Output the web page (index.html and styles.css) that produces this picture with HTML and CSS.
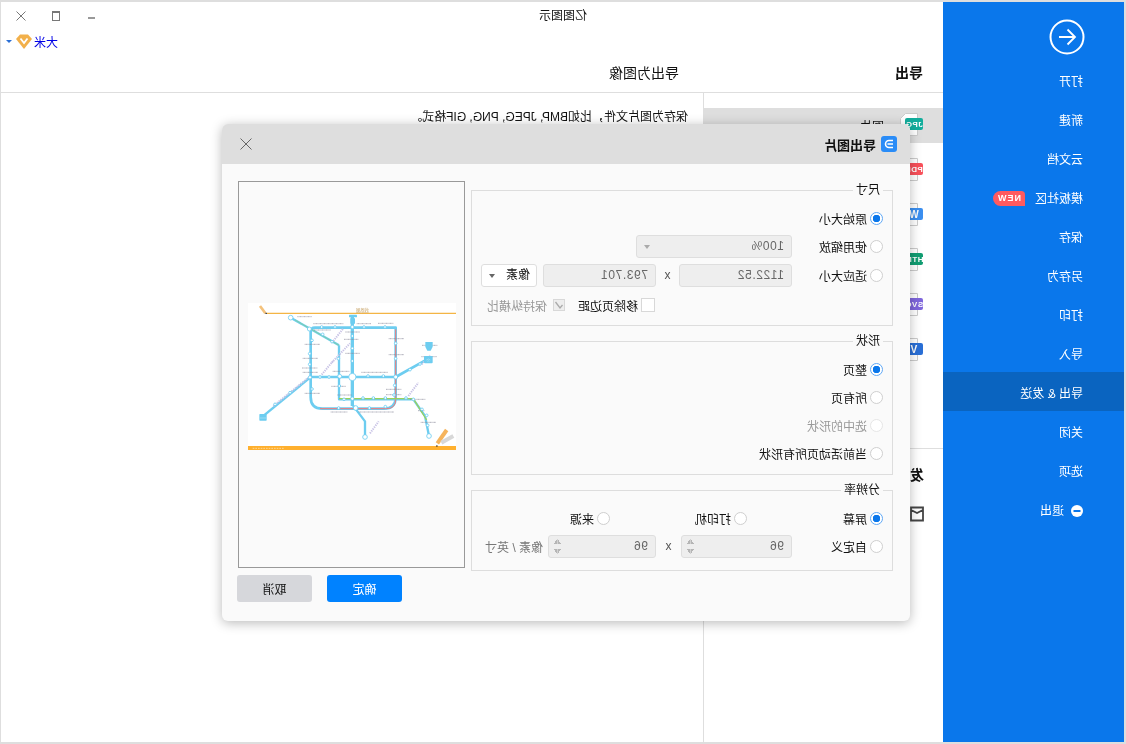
FILE: index.html
```html
<!DOCTYPE html>
<html lang="zh-CN">
<head>
<meta charset="utf-8">
<title>亿图图示</title>
<link rel="stylesheet" href="styles.css">
</head>
<body>
<div class="page">
  <aside class="sidebar">
    <div class="back">
      <svg width="36" height="36" viewBox="0 0 36 36" fill="none" stroke="#fff" stroke-width="2"><circle cx="18" cy="18" r="16.5"/><path d="M10 18h16M17.5 10.5 10 18l7.5 7.5" stroke-width="1.8"/></svg>
    </div>
    <ul class="menu">
      <li class="menu-item">打开</li>
      <li class="menu-item">新建</li>
      <li class="menu-item">云文档</li>
      <li class="menu-item">模板社区<span class="badge">NEW</span></li>
      <li class="menu-item">保存</li>
      <li class="menu-item">另存为</li>
      <li class="menu-item">打印</li>
      <li class="menu-item">导入</li>
      <li class="menu-item is-active">导出 &amp; 发送</li>
      <li class="menu-item">关闭</li>
      <li class="menu-item">选项</li>
      <li class="menu-item">
        <svg class="exit-icon" width="12" height="12" viewBox="0 0 12 12"><circle cx="6" cy="6" r="6" fill="#fff"/><rect x="2.5" y="5" width="7" height="2" fill="#0a77eb"/></svg>退出
      </li>
    </ul>
  </aside>
  <main class="main">
    <div class="titlebar">
      <span class="app-title">亿图图示</span>
      <div class="winctl">
        <svg width="10" height="10" viewBox="0 0 10 10"><rect x="1" y="6" width="7" height="2" fill="#999"/></svg>
        <svg width="10" height="10" viewBox="0 0 10 10" fill="none" stroke="#777"><rect x="1.5" y=".5" width="7" height="9"/><path d="M1.500 1.500h7"/></svg>
        <svg width="10" height="10" viewBox="0 0 10 10" fill="none" stroke="#777"><path d="m.5.5 9 9M9.500.5l-9 9"/></svg>
      </div>
    </div>
    <div class="userbar">
      <span class="user">大米</span>
      <svg width="16" height="15" viewBox="0 0 16 15"><path d="M4 .5h8L16 5l-8 10L0 5z" fill="#f2b04a"/><path d="M4.500 4.500 8 9l3.500-4.500" fill="none" stroke="#fff" stroke-width="1.800"/></svg>
      <span class="user-caret"></span>
    </div>
    <div class="heads">
      <h2 class="head-left">导出</h2>
      <h2 class="head-right">导出为图像</h2>
    </div>
    <div class="content">
      <nav class="panel">
        <ul class="files">
          <li class="file is-current">
            <svg class="file-icon" width="24" height="24" viewBox="0 0 24 24"><path d="M5.500.5h12l5 5v17h-17z" fill="#fff" stroke="#ccc"/><rect y="5" width="18" height="12" rx="2" fill="#13ad9c"/><text x="9" y="14" class="file-tag">JPG</text></svg>
            <span>图片</span>
          </li>
          <li class="file">
            <svg class="file-icon" width="24" height="24" viewBox="0 0 24 24"><path d="M5.500.5h17v22h-17z" fill="#fff" stroke="#ccc"/><rect y="5" width="18" height="12" rx="2" fill="#f8505a"/><text x="9" y="14" class="file-tag">PDF</text></svg>
          </li>
          <li class="file">
            <svg class="file-icon" width="24" height="24" viewBox="0 0 24 24"><path d="M5.500.5h17v22h-17z" fill="#fff" stroke="#ccc"/><rect y="5" width="18" height="12" rx="2" fill="#3b8ff0"/><text x="9" y="14.500" class="file-tag big">W</text></svg>
          </li>
          <li class="file">
            <svg class="file-icon" width="24" height="24" viewBox="0 0 24 24"><path d="M5.500.5h17v22h-17z" fill="#fff" stroke="#ccc"/><rect y="5" width="18" height="12" rx="2" fill="#119d72"/><text x="9" y="14" class="file-tag">HTM</text></svg>
          </li>
          <li class="file">
            <svg class="file-icon" width="24" height="24" viewBox="0 0 24 24"><path d="M5.500.5h17v22h-17z" fill="#fff" stroke="#ccc"/><rect y="5" width="18" height="12" rx="2" fill="#7f66dc"/><text x="9" y="14" class="file-tag">SVG</text></svg>
          </li>
          <li class="file">
            <svg class="file-icon" width="24" height="24" viewBox="0 0 24 24"><path d="M5.500.5h17v22h-17z" fill="#fff" stroke="#ccc"/><rect y="5" width="18" height="12" rx="2" fill="#2a6fd6"/><text x="9" y="14.500" class="file-tag big">V</text></svg>
          </li>
        </ul>
        <div class="send">
          <h3 class="send-head">发送</h3>
          <svg width="14" height="16" viewBox="0 0 14 16" fill="none" stroke="#444" stroke-width="1.800"><path d="M1 1.500h12v13H1zM1 4l6 3 6-3"/></svg>
        </div>
      </nav>
      <section class="detail">保存为图片文件，比如BMP, JPEG, PNG, GIF格式。</section>
    </div>
  </main>

  <div class="dialog">
    <header class="dlg-head">
      <svg class="dlg-logo" width="16" height="16" viewBox="0 0 16 16"><rect width="16" height="16" rx="3" fill="#2a8cf7"/><g transform="translate(16 0) scale(-1 1)" fill="none" stroke="#fff" stroke-width="1.600"><path d="M12 4.500H8a3.500 3.500 0 0 0 0 7h4M6.500 8H12"/></g></svg>
      <span class="dlg-title">导出图片</span>
      <svg class="dlg-close" width="12" height="12" viewBox="0 0 12 12" fill="none" stroke="#666"><path d="m.5.500 11 11M11.500.500l-11 11"/></svg>
    </header>
    <div class="dlg-body">
      <div class="groups">
        <fieldset class="group group-size">
          <legend class="legend">尺寸</legend>
          <div class="row"><label class="opt"><i class="radio on"></i>原始大小</label></div>
          <div class="row">
            <label class="opt w91"><i class="radio"></i>使用缩放</label>
            <div class="field w156">100%<i class="caret muted"></i></div>
          </div>
          <div class="row row-gap">
            <label class="opt w91"><i class="radio"></i>适应大小</label>
            <div class="field w113">1122.52</div>
            <span class="times w23">x</span>
            <div class="field w113">793.701</div>
            <div class="select">像素<i class="caret"></i></div>
          </div>
          <div class="row row-check">
            <label class="check-wrap w90"><i class="check"></i>移除页边距</label>
            <label class="check-wrap muted-text"><i class="check ticked">
              <svg width="12" height="12" viewBox="0 0 12 12" fill="none" stroke="#aaa" stroke-width="1.300"><path d="m2.500 6 2.500 3 4.500-6"/></svg>
            </i>保持纵横比</label>
          </div>
        </fieldset>
        <fieldset class="group group-shape">
          <legend class="legend">形状</legend>
          <div class="row"><label class="opt"><i class="radio on"></i>整页</label></div>
          <div class="row"><label class="opt"><i class="radio"></i>所有页</label></div>
          <div class="row"><label class="opt disabled"><i class="radio off"></i>选中的形状</label></div>
          <div class="row"><label class="opt"><i class="radio"></i>当前活动页所有形状</label></div>
        </fieldset>
        <fieldset class="group group-res">
          <legend class="legend">分辨率</legend>
          <div class="row">
            <label class="opt w136"><i class="radio on"></i>屏幕</label>
            <label class="opt w137"><i class="radio"></i>打印机</label>
            <label class="opt"><i class="radio"></i>来源</label>
          </div>
          <div class="row">
            <label class="opt w91"><i class="radio"></i>自定义</label>
            <div class="field w111">96<i class="spin"></i></div>
            <span class="times w25">x</span>
            <div class="field w108">96<i class="spin"></i></div>
            <span class="unit">像素 / 英寸</span>
          </div>
        </fieldset>
      </div>
      <div class="side">
        <div class="preview">
          <svg class="map" width="208" height="147" viewBox="24 21 624 441">
            <rect x="24" y="21" width="624" height="441" fill="#fff"/>
            <g transform="translate(672 0) scale(-1 1)">
              <path d="M80 52h568" stroke="#f4b545" stroke-width="4" fill="none"/>
              <rect x="24" y="450" width="624" height="12" fill="#ffb02e"/>
              <g fill="none" stroke="#6dcdf0" stroke-linejoin="round">
                <path d="M467 243V95H225q-13 0-13 13v195q0 35 35 35h185q35 0 35-35z" stroke-width="8"/>
                <path d="M337 60v270" stroke-width="10"/>
                <path d="M212 243H467l93-52" stroke-width="8"/>
                <path d="M212 243 72 358" stroke-width="7"/>
                <path d="M297 148v162h223l35 50 12 60" stroke-width="7"/>
                <path d="M152 65 297 148" stroke-width="7"/>
                <path d="M337 326l38 50v44" stroke-width="7"/>
              </g>
              <g fill="none">
                <path d="M467 100v210q0 28-28 28H240" stroke="#f27a7a" stroke-width="3"/>
                <path d="M297 308h223l40 64" stroke="#9bd25a" stroke-width="4"/>
                <path d="M165 72 297 148" stroke="#7fd0a8" stroke-width="3"/>
                <g stroke="#c9c4e6" stroke-width="6" stroke-dasharray="4 3">
                  <path d="M100 330 205 245M280 135l30-38M275 200l55-58M245 236l35-42M505 300l30-40M390 412l26-36M545 205l25-27"/>
                </g>
              </g>
              <g stroke="#8a8a9a" stroke-width="2" stroke-dasharray="3 1" fill="none">
                <path d="M172 62h44M220 83h90M222 102h50M316 108h44M312 130h44M350 83h44M414 82h46M194 145h46M188 187h46M316 172h44M446 128h46M446 176h46M186 216h46M188 229h46M364 229h80M278 226h50M546 148h46M544 182h46M274 271h44M292 297h44M194 292h46M438 280h46M438 296h46M510 310h46M272 348h50M356 348h106M542 379h46M534 344h20"/>
              </g>
              <g fill="#fff" stroke="#6dcdf0" stroke-width="2.500">
                <circle cx="152" cy="65" r="7"/><circle cx="208" cy="99" r="6"/><circle cx="248" cy="115" r="4"/><circle cx="276" cy="137" r="4"/>
                <circle cx="245" cy="93" r="4"/><circle cx="285" cy="93" r="4"/><circle cx="337" cy="93" r="5"/><circle cx="372" cy="93" r="4"/><circle cx="435" cy="93" r="4"/>
                <circle cx="337" cy="120" r="4"/><circle cx="337" cy="157" r="4"/><circle cx="337" cy="195" r="4"/><circle cx="337" cy="243" r="11"/>
                <circle cx="216" cy="133" r="4"/><circle cx="209" cy="173" r="4"/><circle cx="209" cy="205" r="4"/><circle cx="240" cy="243" r="4"/><circle cx="267" cy="243" r="4"/><circle cx="299" cy="241" r="6"/><circle cx="210" cy="244" r="5"/>
                <circle cx="295" cy="188" r="4"/><circle cx="384" cy="240" r="4"/><circle cx="430" cy="240" r="4"/><circle cx="467" cy="243" r="6"/><circle cx="510" cy="221" r="4"/><circle cx="540" cy="204" r="4"/>
                <circle cx="467" cy="142" r="4"/><circle cx="467" cy="188" r="4"/><circle cx="464" cy="268" r="4"/><circle cx="462" cy="297" r="4"/><circle cx="216" cy="279" r="4"/>
                <circle cx="337" cy="308" r="5"/><circle cx="369" cy="306" r="4"/><circle cx="400" cy="306" r="4"/><circle cx="436" cy="306" r="4"/><circle cx="498" cy="306" r="4"/><circle cx="520" cy="310" r="4"/><circle cx="312" cy="310" r="4"/>
                <circle cx="347" cy="336" r="7"/><circle cx="296" cy="336" r="4"/><circle cx="388" cy="336" r="4"/><circle cx="436" cy="332" r="4"/><circle cx="298" cy="270" r="4"/>
                <circle cx="546" cy="340" r="4"/><circle cx="560" cy="358" r="4"/><circle cx="563" cy="388" r="4"/><circle cx="567" cy="420" r="7"/><circle cx="375" cy="423" r="7"/>
                <circle cx="150" cy="290" r="4"/><circle cx="105" cy="325" r="4"/>
              </g>
              <g fill="#6dcdf0">
                <rect x="327" y="56" width="24" height="8" rx="2"/><rect x="331" y="66" width="14" height="18" rx="3"/>
                <path d="M556 138h22v14l-6 12h-10l-6-12z"/><rect x="552" y="180" width="26" height="22" rx="3"/>
                <rect x="58" y="354" width="22" height="20" rx="2"/>
              </g>
              <g fill="none" stroke="#fff"><path d="M60 366h18M559 192q6-6 12 0M562 196q3-3 6 0"/></g>
              <g fill="none" stroke-linecap="butt">
                <path d="M60 30 76 52" stroke="#f4c27c" stroke-width="8"/>
                <path d="M76 52h5" stroke="#222" stroke-width="3"/>
                <path d="M620 402 592 442" stroke="#f6b45c" stroke-width="12"/>
                <path d="M604 440l36-20" stroke="#d8d8d8" stroke-width="12"/>
                <path d="M588 450h5" stroke="#222" stroke-width="3"/>
              </g>
              <text x="367" y="47" class="map-title" transform="translate(734 0) scale(-1 1)">线路图</text>
              <path d="M38 457h95" stroke="#fff" stroke-width="1.500" stroke-dasharray="5 3"/>
            </g>
          </svg>
        </div>
        <div class="actions">
          <button class="btn primary" type="button">确定</button>
          <button class="btn" type="button">取消</button>
        </div>
      </div>
    </div>
  </div>
</div>
</body>
</html>
```

FILE: styles.css
```css
* { box-sizing: border-box; }
html, body { margin: 0; padding: 0; }
body {
  width: 1126px;
  height: 744px;
  overflow: hidden;
  background: #fff;
  font-family: "Liberation Sans", "Noto Sans CJK SC", sans-serif;
  font-size: 12px;
  color: #111;
}
ul { list-style: none; margin: 0; padding: 0; }
h2, h3 { margin: 0; }
i { font-style: normal; }

/* the whole window is horizontally mirrored in the reference */
.page {
  position: relative;
  display: flex;
  width: 1126px;
  height: 744px;
  border-style: solid;
  border-color: #dedede;
  border-width: 2px 1px 2px 2px;
  transform: scaleX(-1);
}

.sidebar { flex: 0 0 181px; background: #0a77eb; color: #fff; }
.back { height: 58px; padding: 17px 0 0 39px; }
.back svg { display: block; }
.menu-item {
  display: flex;
  align-items: center;
  height: 39px;
  padding: 4px 0 0 41px;
  line-height: 16px;
}
.menu-item.is-active { background: #0a64c0; }
.badge {
  width: 32px;
  height: 15px;
  margin-left: 10px;
  border-radius: 4px 8px 8px 0;
  background: #ff5a5f;
  color: #fff;
  font-size: 9px;
  font-weight: 700;
  letter-spacing: 1px;
  line-height: 15px;
  text-align: center;
}
.exit-icon { margin-right: 7px; }

.main { flex: 1; display: flex; flex-direction: column; min-width: 0; }
.titlebar { display: flex; align-items: center; height: 26px; padding: 2px 15px 0 356px; }
.app-title { line-height: 24px; }
.winctl { display: flex; gap: 25px; margin-left: auto; }
.winctl svg { display: block; }
.userbar { display: flex; align-items: center; height: 28px; padding: 0 0 2px 885px; }
.user { color: #0000e6; width: 26px; }
.user-caret {
  margin-left: 4px;
  border-top: 3px solid #2a6fd6;
  border-left: 3px solid transparent;
  border-right: 3px solid transparent;
}
.heads { display: flex; height: 37px; padding: 0 0 2px 20px; align-items: center; border-bottom: 1px solid #dedede; }
.head-left { width: 244px; font-size: 14px; font-weight: 700; line-height: 18px; }
.head-right { font-size: 14px; font-weight: 400; line-height: 18px; }

.content { flex: 1; display: flex; min-height: 0; }
.panel { flex: 0 0 240px; border-right: 1px solid #dedede; padding-top: 15px; }
.files { display: flex; flex-direction: column; gap: 10px; }
.file { display: flex; align-items: center; gap: 15px; height: 35px; padding-left: 20px; }
.file.is-current { background: #dedede; }
.file-icon { margin-top: -1px; }
.file-tag { fill: #fff; font-size: 8px; font-weight: 700; letter-spacing: .5px; text-anchor: middle; }
.file-tag.big { font-size: 10px; letter-spacing: 0; }
.send { margin-top: 80px; padding: 16px 0 0 19px; border-top: 1px solid #dedede; }
.send-head { font-size: 14px; font-weight: 700; line-height: 20px; margin-bottom: 21px; }
.send svg { display: block; }
.detail { flex: 1; padding: 16px 0 0 15px; line-height: 16px; }

.dialog {
  position: absolute;
  left: 214px;
  top: 122px;
  width: 688px;
  height: 497px;
  border-radius: 6px;
  overflow: hidden;
  background: #fafafa;
  box-shadow: 0 2px 12px rgba(0, 0, 0, .28);
}
.dlg-head { display: flex; align-items: center; height: 40px; padding: 0 18px 0 13px; background: #dedede; }
.dlg-title { margin-left: 5px; font-size: 13px; font-weight: 700; }
.dlg-close { margin-left: auto; }
.dlg-body { display: flex; gap: 6px; padding: 17px 0 0 17px; }
.groups { display: flex; flex-direction: column; gap: 6px; width: 422px; }
.group { margin: 0; padding: 5px 0 0 9px; border: 1px solid #dddddd; min-width: 0; }
.group-size { height: 145px; }
.group-shape { height: 143px; }
.group-res { height: 90px; }
.legend { margin-left: 0; padding: 0 3px; height: 18px; line-height: 18px; font-size: 12px; }
.row { display: flex; align-items: center; height: 28px; }
.row-gap { margin-top: 1px; }
.row-check { margin-top: 2px; padding-left: 228px; }
.opt { display: flex; align-items: center; gap: 3px; white-space: nowrap; }
.opt.disabled { color: #999; }
.radio {
  flex: none;
  width: 13px;
  height: 13px;
  border: 1.5px solid #cfcfcf;
  border-radius: 50%;
  background: #fff;
}
.radio.on { border-color: #5fa8f6; background: radial-gradient(circle, #0a77eb 0 3.5px, #fff 4px); }
.radio.off { border-color: #e6e6e6; }
.w91 { width: 91px; flex: none; }
.w136 { width: 136px; flex: none; }
.w137 { width: 137px; flex: none; }
.w156 { width: 156px; flex: none; }
.w113 { width: 113px; flex: none; }
.w111 { width: 111px; flex: none; }
.w108 { width: 108px; flex: none; }
.w90 { width: 90px; flex: none; }
.w23 { width: 23px; flex: none; }
.w25 { width: 25px; flex: none; }
.field {
  position: relative;
  height: 23px;
  padding-left: 7px;
  border: 1px solid #dedede;
  border-radius: 3px;
  background: #eeeeee;
  color: #666;
  font-size: 12px;
  letter-spacing: .6px;
  line-height: 21px;
}
.times { color: #555; text-align: center; }
.select {
  position: relative;
  flex: none;
  width: 56px;
  height: 23px;
  margin-left: 6px;
  padding-left: 6px;
  border: 1px solid #dedede;
  border-radius: 3px;
  background: #fff;
  line-height: 21px;
}
.caret {
  position: absolute;
  right: 7px;
  top: 9px;
  border-top: 4px solid #666;
  border-left: 3.5px solid transparent;
  border-right: 3.5px solid transparent;
}
.caret.muted { border-top-color: #aaa; }
.spin {
  position: absolute;
  right: 5px;
  top: 3px;
  width: 7px;
  height: 15px;
  background:
    linear-gradient(to bottom right, transparent 50%, #b5b5b5 50%) left top / 3.5px 5px no-repeat,
    linear-gradient(to bottom left, transparent 50%, #b5b5b5 50%) right top / 3.5px 5px no-repeat,
    linear-gradient(to top right, transparent 50%, #b5b5b5 50%) left bottom / 3.5px 5px no-repeat,
    linear-gradient(to top left, transparent 50%, #b5b5b5 50%) right bottom / 3.5px 5px no-repeat;
}
.unit { margin-left: 5px; color: #777; white-space: nowrap; }
.check-wrap { display: flex; align-items: center; gap: 3px; white-space: nowrap; }
.check { flex: none; width: 14px; height: 14px; border: 1px solid #d8d8d8; background: #fff; }
.check.ticked { width: 12px; height: 12px; margin-right: 3px; background: #eee; }
.check.ticked svg { display: block; margin: -1px; }
.muted-text { color: #999; }

.side { flex: none; width: 228px; }
.preview {
  display: flex;
  align-items: center;
  justify-content: center;
  width: 227px;
  height: 387px;
  padding: 3px 1px 0 0;
  border: 1px solid #999;
  background: #fafafa;
}
.map { display: block; }
.map-title { fill: #c9a66b; font-size: 13px; text-anchor: middle; }
.actions { display: flex; gap: 15px; justify-content: flex-end; padding-top: 7px; }
.btn {
  width: 75px;
  height: 27px;
  padding: 0;
  border: 0;
  border-radius: 3px;
  background: #d6d7db;
  color: #111;
  font: inherit;
}
.btn.primary { background: #0082ff; color: #fff; }
```
